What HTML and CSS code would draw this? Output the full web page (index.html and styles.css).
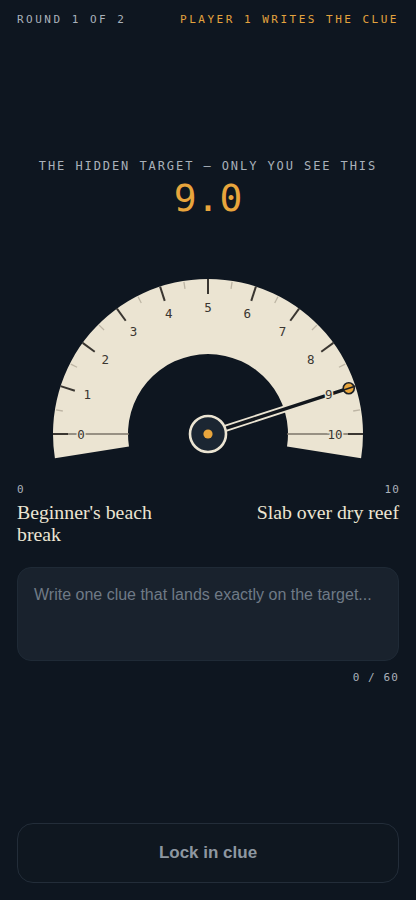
FILE: index.html
```html
<!DOCTYPE html>
<html lang="en">
<head>
<meta charset="utf-8">
<title>Round 1 of 2</title>
<link rel="stylesheet" href="styles.css">
</head>
<body>
<main class="screen">
  <header class="topbar">
    <span class="round">ROUND 1 OF 2</span>
    <span class="turn">PLAYER 1 WRITES THE CLUE</span>
  </header>

  <section class="target">
    <p class="target-label">THE HIDDEN TARGET — ONLY YOU SEE THIS</p>
    <p class="target-value">9.0</p>
  </section>

  <svg class="dial" viewBox="17 268 382 200" width="382" height="200" aria-hidden="true">
    <path class="band" d="M54.91 457.25 A155 155 0 1 1 361.09 457.25 L287.02 445.51 A80 80 0 1 0 128.98 445.51 Z"/>
    <line class="baseline" x1="53" y1="433" x2="129" y2="433"/>
    <line class="baseline" x1="287" y1="433" x2="363" y2="433"/>
    <g transform="translate(208 433)">
      <g class="minor">
        <line x1="-154" y1="0" x2="-147" y2="0" transform="rotate(9)"/>
        <line x1="-154" y1="0" x2="-147" y2="0" transform="rotate(27)"/>
        <line x1="-154" y1="0" x2="-147" y2="0" transform="rotate(45)"/>
        <line x1="-154" y1="0" x2="-147" y2="0" transform="rotate(63)"/>
        <line x1="-154" y1="0" x2="-147" y2="0" transform="rotate(81)"/>
        <line x1="-154" y1="0" x2="-147" y2="0" transform="rotate(99)"/>
        <line x1="-154" y1="0" x2="-147" y2="0" transform="rotate(117)"/>
        <line x1="-154" y1="0" x2="-147" y2="0" transform="rotate(135)"/>
        <line x1="-154" y1="0" x2="-147" y2="0" transform="rotate(153)"/>
        <line x1="-154" y1="0" x2="-147" y2="0" transform="rotate(171)"/>
      </g>
      <g class="major">
        <line x1="-155" y1="0" x2="-140" y2="0"/>
        <line x1="-155" y1="0" x2="-140" y2="0" transform="rotate(18)"/>
        <line x1="-155" y1="0" x2="-140" y2="0" transform="rotate(36)"/>
        <line x1="-155" y1="0" x2="-140" y2="0" transform="rotate(54)"/>
        <line x1="-155" y1="0" x2="-140" y2="0" transform="rotate(72)"/>
        <line x1="-155" y1="0" x2="-140" y2="0" transform="rotate(90)"/>
        <line x1="-155" y1="0" x2="-140" y2="0" transform="rotate(108)"/>
        <line x1="-155" y1="0" x2="-140" y2="0" transform="rotate(126)"/>
        <line x1="-155" y1="0" x2="-140" y2="0" transform="rotate(144)"/>
        <line x1="-155" y1="0" x2="-140" y2="0" transform="rotate(162)"/>
        <line x1="-155" y1="0" x2="-140" y2="0" transform="rotate(180)"/>
      </g>
    </g>
    <line class="needle-halo" x1="226.07" y1="427.13" x2="343.53" y2="388.96"/>
    <line class="needle" x1="226.07" y1="427.13" x2="343.53" y2="388.96"/>
    <circle class="knob" cx="348.76" cy="387.27" r="5.5"/>
    <line class="knob-stripe" x1="343.53" y1="388.96" x2="353.51" y2="385.72"/>
    <g class="num">
      <text x="81" y="433">0</text>
      <text x="87.2" y="393.8">1</text>
      <text x="105.3" y="358.4">2</text>
      <text x="133.4" y="330.3">3</text>
      <text x="168.8" y="312.2">4</text>
      <text x="208" y="306.5">5</text>
      <text x="247.2" y="312.2">6</text>
      <text x="282.6" y="330.3">7</text>
      <text x="310.7" y="358.4">8</text>
      <text x="328.8" y="393.8">9</text>
      <text x="335" y="433">10</text>
    </g>
    <circle class="hub" cx="208" cy="433" r="18"/>
    <circle class="hub-dot" cx="208" cy="433" r="4.6"/>
  </svg>

  <section class="ends">
    <div class="end end-left">
      <span class="end-num">0</span>
      <span class="end-text">Beginner's beach break</span>
    </div>
    <div class="end end-right">
      <span class="end-num">10</span>
      <span class="end-text">Slab over dry reef</span>
    </div>
  </section>

  <section class="clue">
    <textarea class="clue-input" maxlength="60" placeholder="Write one clue that lands exactly on the target..."></textarea>
    <div class="counter">0 / 60</div>
  </section>

  <button class="lock" type="button">Lock in clue</button>
</main>
</body>
</html>
```

FILE: styles.css
```css
html, body {
  margin: 0;
  padding: 0;
  background: #0e1620;
}

.screen {
  box-sizing: border-box;
  width: 416px;
  min-height: 900px;
  padding: 0 17px 17px 17px;
  display: flex;
  flex-direction: column;
}

.topbar {
  display: flex;
  justify-content: space-between;
  align-items: center;
  height: 38px;
  font-family: "DejaVu Sans Mono", "Liberation Mono", monospace;
  font-size: 11px;
  letter-spacing: 2.5px;
}

.round { color: #a9b1ba; }
.turn { color: #e3a33e; }

.target {
  margin-top: 120px;
  display: flex;
  flex-direction: column;
  align-items: center;
}

.target-label {
  margin: 0;
  font-family: "DejaVu Sans Mono", "Liberation Mono", monospace;
  font-size: 12px;
  letter-spacing: 0.16em;
  color: #a9b1ba;
  line-height: 16px;
}

.target-value {
  margin: 2px 0 0 0;
  font-family: "DejaVu Sans Mono", "Liberation Mono", monospace;
  font-size: 38px;
  line-height: 44px;
  color: #e8a53c;
}

.dial {
  display: block;
  margin-top: 49px;
}

.band { fill: #ebe4d2; }
.baseline { stroke: #7b7468; stroke-width: 1.4; }
.minor line { stroke: #bdb5a4; stroke-width: 1.3; }
.major line { stroke: #3a3631; stroke-width: 2; }

.num text {
  font-family: "DejaVu Sans Mono", "Liberation Mono", monospace;
  font-size: 12.5px;
  fill: #3a3631;
  text-anchor: middle;
  dominant-baseline: central;
  stroke: #ebe4d2;
  stroke-width: 3px;
  paint-order: stroke;
}

.needle-halo { stroke: #ebe4d2; stroke-width: 7; stroke-linecap: round; }
.needle { stroke: #12171d; stroke-width: 3.4; stroke-linecap: round; }
.knob { fill: #e8a53c; stroke: #1b1f24; stroke-width: 1.6; }
.knob-stripe { stroke: #1b1f24; stroke-width: 1.6; }
.hub { fill: #1b2632; stroke: #ebe4d2; stroke-width: 2.6; }
.hub-dot { fill: #e8a53c; }

.ends {
  display: flex;
  justify-content: space-between;
  margin-top: 14px;
}

.end {
  display: flex;
  flex-direction: column;
  width: 46%;
}

.end-right { align-items: flex-end; text-align: right; }

.end-num {
  font-family: "DejaVu Sans Mono", "Liberation Mono", monospace;
  font-size: 11px;
  color: #a9b1ba;
  letter-spacing: 0.1em;
  line-height: 14px;
}

.end-right .end-num { margin-right: -1px; }

.end-text {
  margin-top: 4px;
  font-family: "Liberation Serif", "DejaVu Serif", serif;
  font-size: 19.8px;
  line-height: 22px;
  color: #ece5d3;
}

.clue {
  margin-top: 22px;
  display: flex;
  flex-direction: column;
}

.clue-input {
  box-sizing: border-box;
  width: 100%;
  height: 94px;
  resize: none;
  border: 1px solid #1f2a36;
  border-radius: 14px;
  background: #19222d;
  padding: 17px 8px 17px 16px;
  font-family: "Liberation Sans", Arial, sans-serif;
  font-size: 16px;
  line-height: 20px;
  color: #e4e8ec;
  outline: none;
}

.clue-input::placeholder { color: #6f7a86; }

.counter {
  margin-top: 10px;
  text-align: right;
  font-family: "DejaVu Sans Mono", "Liberation Mono", monospace;
  font-size: 11px;
  letter-spacing: 0.1em;
  color: #a9b1ba;
}

.lock {
  margin-top: auto;
  box-sizing: border-box;
  width: 100%;
  height: 60px;
  border: 1px solid #232d39;
  border-radius: 16px;
  background: #0f1720;
  font-family: "Liberation Sans", Arial, sans-serif;
  font-weight: 700;
  font-size: 17px;
  color: #8e97a1;
}
```
